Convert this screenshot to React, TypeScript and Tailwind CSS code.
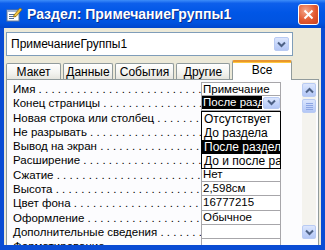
import React from 'react';

const rows = [
  { label: 'Имя', value: 'Примечание' },
  { label: 'Конец страницы', value: 'После раздела', active: true },
  { label: 'Новая строка или столбец', value: '' },
  { label: 'Не разрывать', value: '' },
  { label: 'Вывод на экран', value: '' },
  { label: 'Расширение', value: '' },
  { label: 'Сжатие', value: 'Нет' },
  { label: 'Высота', value: '2,598см' },
  { label: 'Цвет фона', value: '16777215' },
  { label: 'Оформление', value: 'Обычное' },
  { label: 'Дополнительные сведения', value: '' },
  { label: 'Форматирование', value: '' },
];

const options = ['Отсутствует', 'До раздела', 'После раздела', 'До и после раздела'];

const tabs = [
  { name: 'Макет', w: 'w-[55px]' },
  { name: 'Данные', w: 'w-[50px]' },
  { name: 'События', w: 'w-[59px]' },
  { name: 'Другие', w: 'w-[54px]' },
];

const dots = ' .'.repeat(40);

const Chevron = ({ up = false }: { up?: boolean }) => (
  <svg width="9" height="7" viewBox="0 0 9 7">
    <path
      d={up ? 'M1 5.5 L4.5 2 L8 5.5' : 'M1 1.5 L4.5 5 L8 1.5'}
      fill="none"
      stroke="#4D6185"
      strokeWidth="2"
    />
  </svg>
);

const XpButton = ({ className, children }: { className: string; children: React.ReactNode }) => (
  <div
    className={`flex items-center justify-center rounded-[2px] border border-[#B9CBF3] bg-[linear-gradient(to_bottom,#DCE6FD,#C2D3FA_60%,#B4C7F5)] ${className}`}
  >
    {children}
  </div>
);

export default function App() {
  return (
    <div className="w-[325px] h-[250px] overflow-hidden flex flex-col bg-[#0A4CD4] font-['Liberation_Sans',Arial,sans-serif] text-[12px] text-black">
      {/* title bar */}
      <div className="h-[28px] shrink-0 flex items-center pl-[6px] pr-[6px] bg-[linear-gradient(to_bottom,#3E8DF9_0%,#0D5FEB_12%,#0056E6_45%,#0053E0_80%,#0046CC_100%)]">
        <svg width="17" height="16" viewBox="0 0 17 16">
          <rect x="1" y="4" width="12" height="11" fill="#FFFFFF" stroke="#6B7C93" />
          <rect x="1" y="4" width="12" height="2" fill="#9FB4D6" />
          <path d="M3 8.5h7M3 10.5h7M3 12.5h5" stroke="#4F6A96" strokeWidth="1" />
          <path d="M8 9 L14 2 L16 3.5 L10 10.5 L7.5 11 Z" fill="#F5C542" stroke="#8A6A12" strokeWidth="0.8" />
        </svg>
        <span className="ml-[4px] text-white font-bold text-[14px] [text-shadow:1px_1px_0_#0A2E8C]">
          Раздел: ПримечаниеГруппы1
        </span>
        <div className="ml-auto w-[21px] h-[21px] rounded-[3px] border border-white flex items-center justify-center bg-[radial-gradient(circle_at_35%_30%,#F4A68A,#E2582F_55%,#C8401E)]">
          <svg width="11" height="11" viewBox="0 0 11 11">
            <path d="M1.5 1.5 L9.5 9.5 M9.5 1.5 L1.5 9.5" stroke="#FFFFFF" strokeWidth="2" />
          </svg>
        </div>
      </div>

      {/* frame */}
      <div className="flex-1 px-[4px] pb-[5px] min-h-0">
        <div className="h-full bg-[#ECE9D8] flex flex-col pt-[4px] px-[2px] overflow-hidden">
          {/* combo */}
          <div className="h-[24px] w-[287px] shrink-0 border border-[#7F9DB9] bg-white flex items-center pl-[4px] pr-[3px]">
            <span>ПримечаниеГруппы1</span>
            <XpButton className="ml-auto w-[15px] h-[14px]">
              <Chevron />
            </XpButton>
          </div>

          {/* tabs */}
          <div className="h-[20px] mt-[4px] shrink-0 flex items-end gap-[2px] relative z-10">
            {tabs.map((t) => (
              <div
                key={t.name}
                className={`${t.w} h-[16px] mb-[1px] flex items-center justify-center rounded-t-[2px] border border-b-0 border-[#919B9C] bg-[linear-gradient(to_bottom,#FFFFFF,#F3F3EF_60%,#E6E5DE)]`}
              >
                {t.name}
              </div>
            ))}
            <div className="w-[60px] h-[20px] flex items-center justify-center pb-[3px] rounded-t-[2px] border-x border-[#919B9C] border-t-[2px] border-t-[#E8962E] bg-white shadow-[inset_0_1px_0_#FFC83C]">
              Все
            </div>
          </div>

          {/* panel */}
          <div className="-mt-[1px] flex-1 border border-[#919B9C] bg-[#FCFCFE] pt-[2px] pl-[1px] flex text-[11.5px]">
            <div className="flex flex-col w-[273px] relative">
              {rows.map((r, i) => (
                <div key={r.label} className="h-[14.3px] shrink-0 flex">
                  <div className="w-[193px] pl-[5px] flex whitespace-pre overflow-hidden leading-[14px]">
                    <span>{r.label}</span>
                    <span>{dots}</span>
                  </div>
                  <div
                    className={`w-[80px] border-x border-b border-[#A7A6AA] bg-white flex items-center overflow-hidden whitespace-nowrap ${
                      i === 0 ? 'border-t' : ''
                    }`}
                  >
                    {r.active ? (
                      <>
                        <span className="w-[60px] overflow-hidden bg-black text-white pl-[1px] leading-[13px]">
                          {r.value}
                        </span>
                        <XpButton className="w-[17px] h-[12px] ml-[1px]">
                          <Chevron />
                        </XpButton>
                      </>
                    ) : (
                      <span className="pl-[1px]">{r.value}</span>
                    )}
                  </div>
                </div>
              ))}

              {/* dropdown list */}
              <div className="absolute left-[193px] top-[28.6px] w-[80px] border border-black bg-white flex flex-col">
                {options.map((o) => (
                  <div
                    key={o}
                    className={`h-[14.1px] pl-[2px] flex items-center whitespace-nowrap overflow-hidden text-[12px] ${
                      o === 'После раздела' ? 'bg-black text-white' : ''
                    }`}
                  >
                    {o}
                  </div>
                ))}
              </div>
            </div>

            {/* scrollbar */}
            <div className="ml-auto mr-[2px] w-[14px] h-[157px] flex flex-col bg-[#F4F3EE] pt-[1px]">
              <XpButton className="h-[14px] shrink-0">
                <Chevron up />
              </XpButton>
              <XpButton className="h-[14px] mt-[2px] shrink-0">
                <svg width="7" height="7" viewBox="0 0 7 7">
                  <path d="M0 0.5h7M0 2.5h7M0 4.5h7M0 6.5h7" stroke="#8DA5E3" strokeWidth="1" />
                </svg>
              </XpButton>
              <div className="flex-1" />
              <XpButton className="h-[14px] shrink-0">
                <Chevron />
              </XpButton>
            </div>
          </div>
        </div>
      </div>
    </div>
  );
}
